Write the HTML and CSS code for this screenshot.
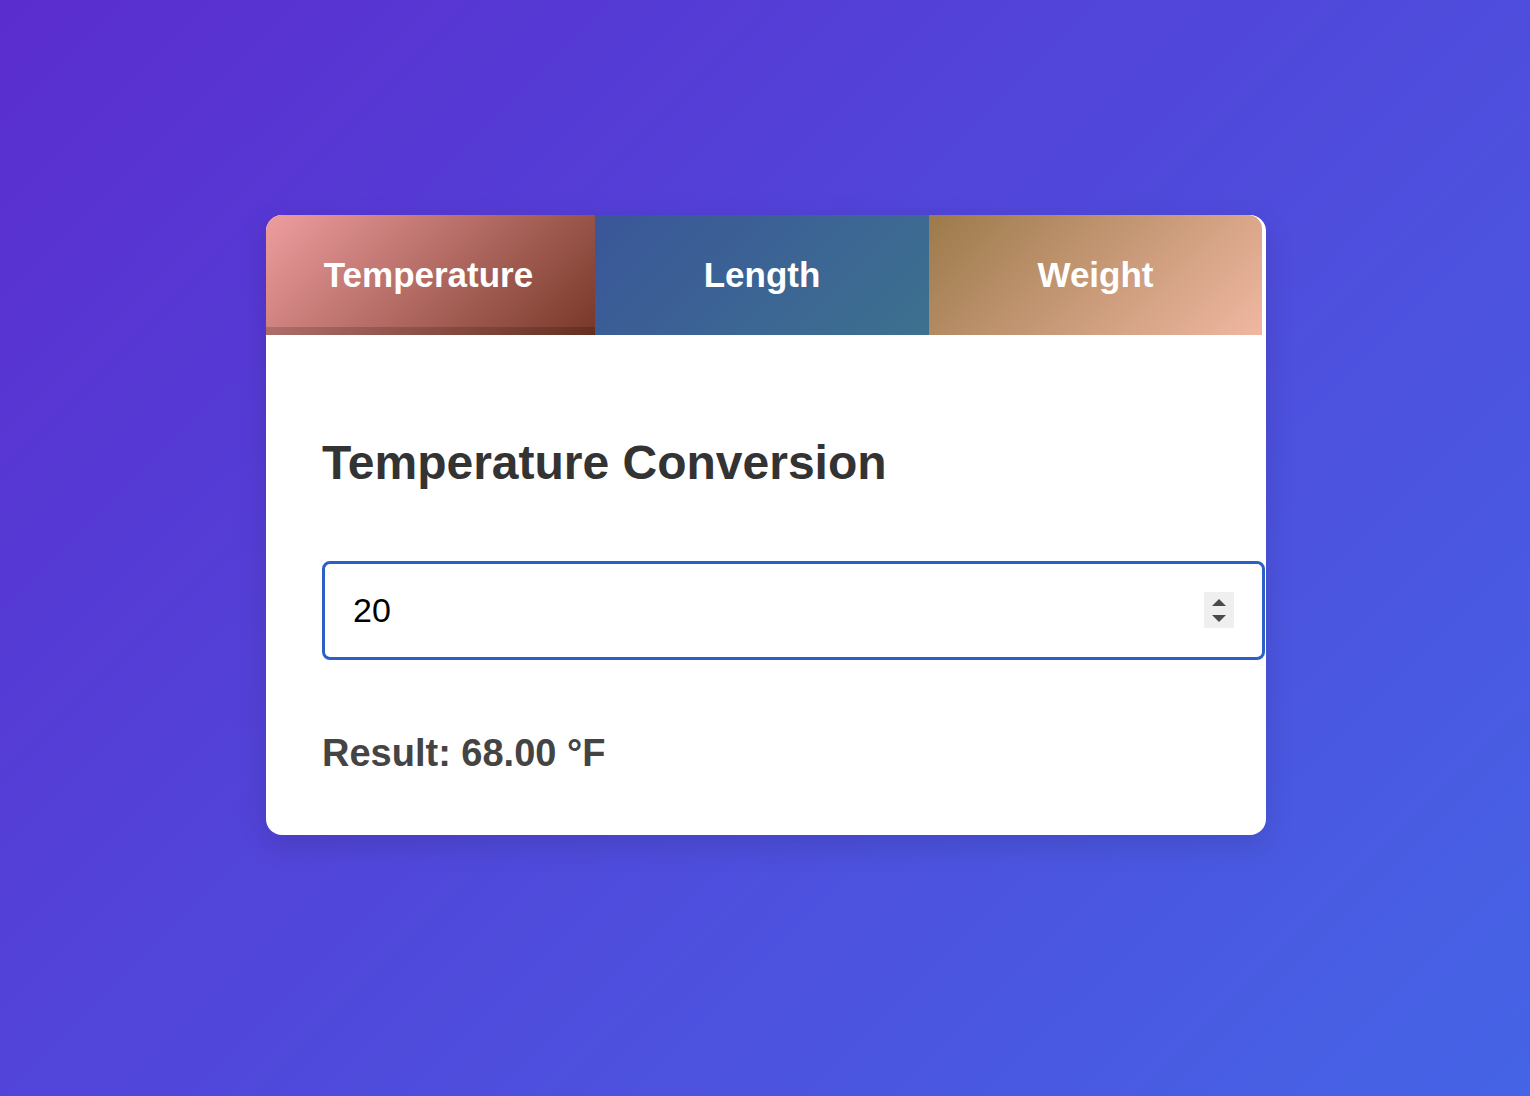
FILE: index.html
```html
<!DOCTYPE html>
<html lang="en">
<head>
<meta charset="utf-8">
<title>Unit Converter</title>
<link rel="stylesheet" href="styles.css">
</head>
<body>
<div class="page">
  <div class="card">
    <div class="tabs">
      <div class="tab tab-temp active">Temperature</div>
      <div class="tab tab-length">Length</div>
      <div class="tab tab-weight">Weight</div>
    </div>
    <div class="panel">
      <h2 class="title">Temperature Conversion</h2>
      <div class="field">
        <input class="num" type="text" value="20">
        <div class="spin">
          <span class="up"></span>
          <span class="down"></span>
        </div>
      </div>
      <div class="result">Result: 68.00 °F</div>
    </div>
  </div>
</div>
</body>
</html>
```
FILE: styles.css
```css
html, body {
  margin: 0;
  padding: 0;
}
body {
  width: 1530px;
  height: 1096px;
  overflow: hidden;
  background: linear-gradient(135deg, #5b2dcf, #4564e6);
  font-family: "Liberation Sans", Arial, sans-serif;
}
.page {
  padding: 215px 0 0 266px;
}
.card {
  width: 1000px;
  height: 620px;
  background: #fff;
  border-radius: 16px;
  overflow: hidden;
  box-shadow: 0 10px 30px rgba(0, 0, 0, 0.12);
  display: flex;
  flex-direction: column;
}
.tabs {
  display: flex;
  height: 120px;
  flex: none;
}
.tab {
  display: flex;
  align-items: center;
  justify-content: center;
  color: #fff;
  font-weight: bold;
  font-size: 35px;
  box-sizing: border-box;
}
.tab-temp {
  width: 329px;
  background: linear-gradient(135deg, #ee9d9f, #773828);
  box-shadow: inset 0 -8px 0 rgba(0, 0, 0, 0.16);
  padding-right: 4px;
}
.tab-length {
  width: 334px;
  background: linear-gradient(135deg, #3a5699, #3d718f);
}
.tab-weight {
  width: 333px;
  background: linear-gradient(135deg, #9c7a4b, #f0b7a1);
  border-top-right-radius: 14px;
}
.panel {
  padding: 100px 0 0 56px;
  display: flex;
  flex-direction: column;
}
.title {
  margin: 0;
  font-size: 48px;
  line-height: 55px;
  font-weight: bold;
  color: #333;
}
.field {
  position: relative;
  margin-top: 71px;
  width: 943px;
  height: 99px;
}
.num {
  box-sizing: border-box;
  width: 943px;
  height: 99px;
  margin: 0;
  border: 3px solid #2c60c6;
  border-radius: 8px;
  padding: 0 0 0 28px;
  font-family: "Liberation Sans", Arial, sans-serif;
  font-size: 34px;
  color: #000;
  background: #fff;
  outline: none;
}
.spin {
  position: absolute;
  left: 882px;
  top: 31px;
  width: 30px;
  height: 36px;
  background: #efefef;
  display: flex;
  flex-direction: column;
  align-items: center;
  justify-content: center;
  gap: 9px;
}
.up {
  width: 0;
  height: 0;
  border-left: 7px solid transparent;
  border-right: 7px solid transparent;
  border-bottom: 7px solid #4a4a4a;
}
.down {
  width: 0;
  height: 0;
  border-left: 7px solid transparent;
  border-right: 7px solid transparent;
  border-top: 7px solid #4a4a4a;
}
.result {
  margin-top: 72px;
  font-size: 38px;
  font-weight: bold;
  color: #444;
}
```
